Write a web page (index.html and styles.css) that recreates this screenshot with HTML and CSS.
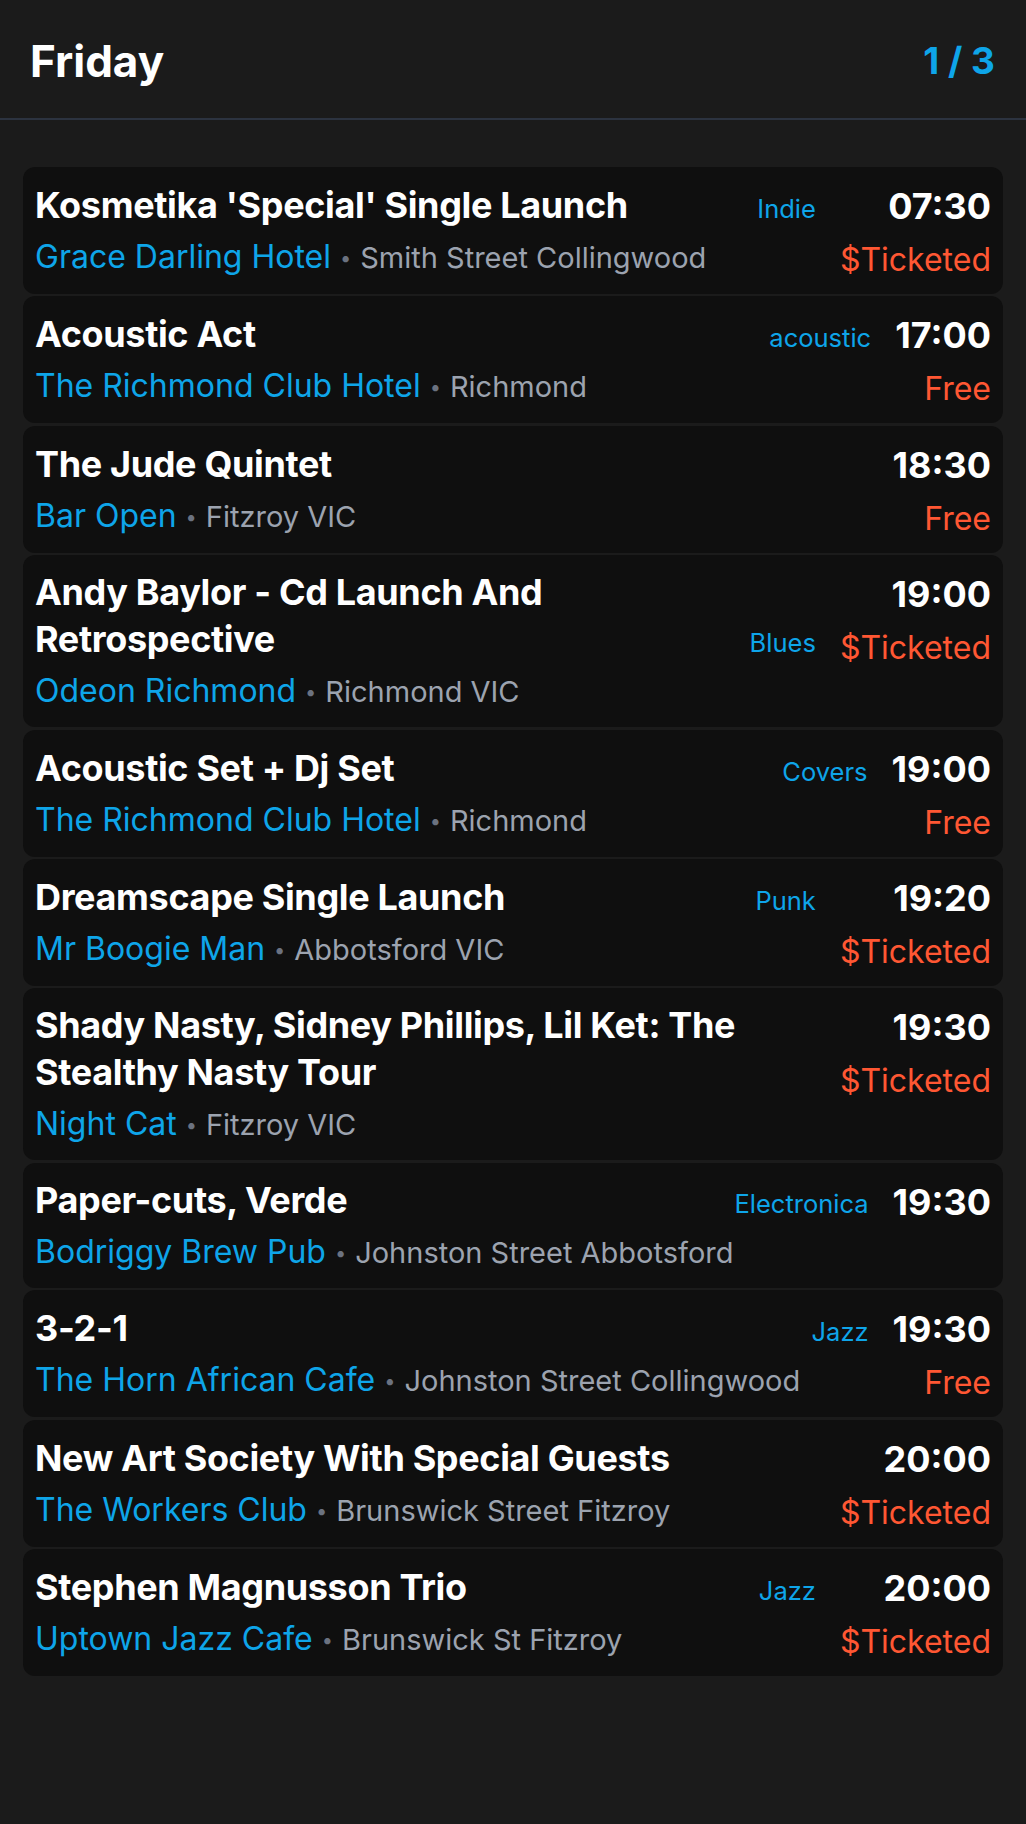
FILE: index.html
```html
<!DOCTYPE html>
<html lang="en">
<head>
<meta charset="utf-8">
<title>Friday</title>
<link rel="stylesheet" href="styles.css">
</head>
<body>
<header class="header">
  <h1 class="day">Friday</h1>
  <div class="pager">1 / 3</div>
</header>
<main class="list">
  <div class="card">
    <div class="title">Kosmetika 'Special' Single Launch</div>
    <div class="genre">Indie</div>
    <div class="right"><div class="time">07:30</div><div class="price">$Ticketed</div></div>
    <div class="where"><span class="venue">Grace Darling Hotel</span><span class="dot">•</span><span class="loc">Smith Street Collingwood</span></div>
  </div>
  <div class="card">
    <div class="title">Acoustic Act</div>
    <div class="genre">acoustic</div>
    <div class="right"><div class="time">17:00</div><div class="price">Free</div></div>
    <div class="where"><span class="venue">The Richmond Club Hotel</span><span class="dot">•</span><span class="loc">Richmond</span></div>
  </div>
  <div class="card">
    <div class="title">The Jude Quintet</div>
    <div class="right"><div class="time">18:30</div><div class="price">Free</div></div>
    <div class="where"><span class="venue">Bar Open</span><span class="dot">•</span><span class="loc">Fitzroy VIC</span></div>
  </div>
  <div class="card">
    <div class="title">Andy Baylor - Cd Launch And Retrospective</div>
    <div class="genre">Blues</div>
    <div class="right"><div class="time">19:00</div><div class="price">$Ticketed</div></div>
    <div class="where"><span class="venue">Odeon Richmond</span><span class="dot">•</span><span class="loc">Richmond VIC</span></div>
  </div>
  <div class="card">
    <div class="title">Acoustic Set + Dj Set</div>
    <div class="genre">Covers</div>
    <div class="right"><div class="time">19:00</div><div class="price">Free</div></div>
    <div class="where"><span class="venue">The Richmond Club Hotel</span><span class="dot">•</span><span class="loc">Richmond</span></div>
  </div>
  <div class="card">
    <div class="title">Dreamscape Single Launch</div>
    <div class="genre">Punk</div>
    <div class="right"><div class="time">19:20</div><div class="price">$Ticketed</div></div>
    <div class="where"><span class="venue">Mr Boogie Man</span><span class="dot">•</span><span class="loc">Abbotsford VIC</span></div>
  </div>
  <div class="card">
    <div class="title">Shady Nasty, Sidney Phillips, Lil Ket: The Stealthy Nasty Tour</div>
    <div class="right"><div class="time">19:30</div><div class="price">$Ticketed</div></div>
    <div class="where"><span class="venue">Night Cat</span><span class="dot">•</span><span class="loc">Fitzroy VIC</span></div>
  </div>
  <div class="card">
    <div class="title">Paper-cuts, Verde</div>
    <div class="genre">Electronica</div>
    <div class="right"><div class="time">19:30</div></div>
    <div class="where"><span class="venue">Bodriggy Brew Pub</span><span class="dot">•</span><span class="loc">Johnston Street Abbotsford</span></div>
  </div>
  <div class="card">
    <div class="title">3-2-1</div>
    <div class="genre">Jazz</div>
    <div class="right"><div class="time">19:30</div><div class="price">Free</div></div>
    <div class="where"><span class="venue">The Horn African Cafe</span><span class="dot">•</span><span class="loc">Johnston Street Collingwood</span></div>
  </div>
  <div class="card">
    <div class="title">New Art Society With Special Guests</div>
    <div class="right"><div class="time">20:00</div><div class="price">$Ticketed</div></div>
    <div class="where"><span class="venue">The Workers Club</span><span class="dot">•</span><span class="loc">Brunswick Street Fitzroy</span></div>
  </div>
  <div class="card">
    <div class="title">Stephen Magnusson Trio</div>
    <div class="genre">Jazz</div>
    <div class="right"><div class="time">20:00</div><div class="price">$Ticketed</div></div>
    <div class="where"><span class="venue">Uptown Jazz Cafe</span><span class="dot">•</span><span class="loc">Brunswick St Fitzroy</span></div>
  </div>
</main>
</body>
</html>
```
FILE: styles.css
```css
* { box-sizing: border-box; }
html, body {
  margin: 0;
  background: #1b1b1b;
  font-family: Inter, "Noto Sans", "DejaVu Sans", sans-serif;
  color: #ffffff;
}
.header {
  display: flex;
  justify-content: space-between;
  align-items: center;
  height: 120px;
  padding: 4px 31px 0 30px;
  border-bottom: 2px solid #2c3340;
}
.day {
  margin: 0;
  font-size: 44px;
  font-weight: 700;
  line-height: 1.2;
  color: #ffffff;
}
.pager {
  font-size: 37px;
  font-weight: 700;
  line-height: 1.2;
  color: #0ea5e9;
}
.list {
  display: flex;
  flex-direction: column;
  gap: 2.4px;
  padding: 47px 23px 40px;
}
.card {
  background: #0f0f0f;
  border-radius: 12px;
  padding: 14px 12px 11px;
  display: grid;
  grid-template-columns: minmax(0, 1fr) auto auto;
  grid-template-rows: auto auto;
  column-gap: 24px;
}
.title {
  grid-column: 1;
  grid-row: 1;
  align-self: last baseline;
  font-size: 36px;
  font-weight: 700;
  line-height: 47px;
  letter-spacing: -0.35px;
  color: #ffffff;
}
.genre {
  grid-column: 2;
  grid-row: 1;
  align-self: last baseline;
  font-size: 25.5px;
  line-height: 39px;
  color: #0ea5e9;
}
.right {
  grid-column: 3;
  grid-row: 1 / 3;
  text-align: right;
  padding-top: 2px;
}
.time {
  font-size: 36px;
  font-weight: 700;
  line-height: 47px;
  color: #ffffff;
}
.price {
  margin-top: 6px;
  font-size: 32px;
  line-height: 47px;
  color: #ff5733;
}
.where {
  grid-column: 1 / 3;
  grid-row: 2;
  margin-top: 2px;
  font-size: 32px;
  line-height: 51px;
  white-space: nowrap;
}
.venue {
  color: #0ea5e9;
}
.dot {
  font-size: 20px;
  line-height: 1;
  color: #6b7280;
  margin: 0 9px;
  vertical-align: 3px;
}
.loc {
  font-size: 29px;
  line-height: 1;
  color: #9ca3af;
}
```
